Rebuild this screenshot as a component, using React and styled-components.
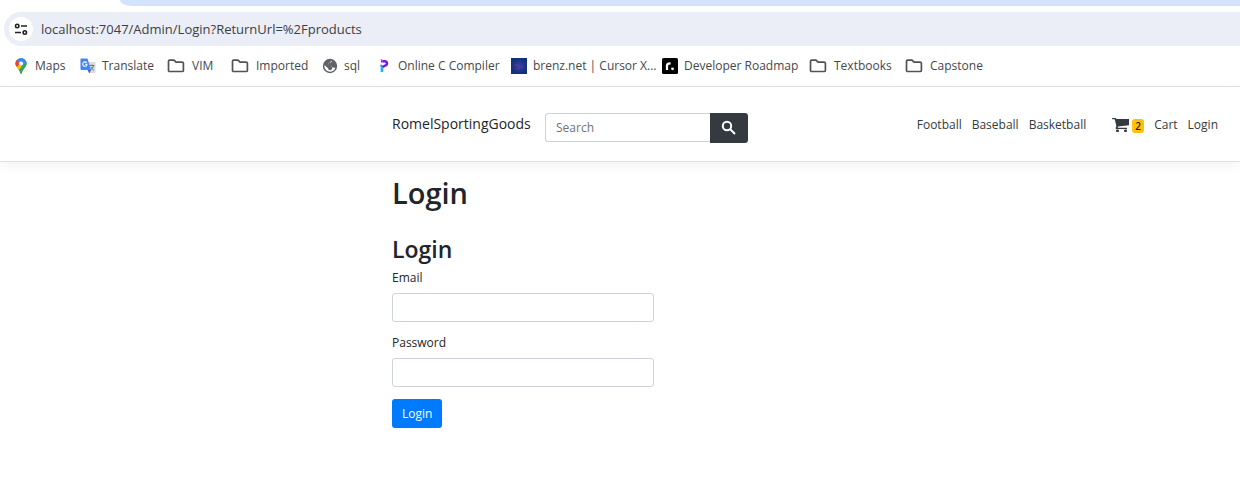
import React from "react";
import styled, { createGlobalStyle } from "styled-components";

const GlobalStyle = createGlobalStyle`
  *, *::before, *::after { box-sizing: border-box; }
  body {
    margin: 0;
    background: #fff;
    color: #212529;
    font-family: "Open Sans", "Noto Sans", sans-serif;
    font-size: 12px;
    line-height: 18px;
    overflow-x: hidden;
  }
  button, input { font: inherit; }
`;

const gutter = "clamp(16px, 32vw, 392px)";

const TabStrip = styled.div`
  height: 6px;
  margin-left: 120px;
  border-bottom-left-radius: 12px 6px;
  background: #d3e3fd;
`;

const AddressBar = styled.div`
  display: flex;
  align-items: center;
  gap: 8px;
  height: 34px;
  margin: 6px 0 0 4px;
  padding-left: 5px;
  border-radius: 17px 0 0 17px;
  background: #ebeef7;
`;

const SiteInfo = styled.button`
  display: grid;
  place-items: center;
  flex: none;
  width: 24px;
  height: 24px;
  padding: 0;
  border: 0;
  border-radius: 50%;
  background: #fff;
`;

const UrlInput = styled.input`
  flex: 1;
  min-width: 0;
  height: 24px;
  padding: 0;
  border: 0;
  outline: 0;
  background: transparent;
  color: #3c4043;
  font-size: 13px;
`;

const Bookmarks = styled.nav`
  display: flex;
  align-items: center;
  gap: 16px;
  height: 41px;
  padding-left: 13px;
  border-bottom: 1px solid #dfe1e5;
  overflow: hidden;
`;

const Bookmark = styled.a`
  display: flex;
  align-items: center;
  gap: 6px;
  flex: none;
  color: #45484b;
  text-decoration: none;
  white-space: nowrap;
`;

const BookmarkLabel = styled.span`
  width: ${(p) => p.$width}px;
`;

const Header = styled.header`
  display: flex;
  align-items: center;
  height: 75px;
  padding: 0 16px 0 ${gutter};
  border-bottom: 1px solid #dee2e6;
  box-shadow: 0 4px 12px rgba(0, 0, 0, 0.05);
`;

const Brand = styled.a`
  flex: none;
  width: 153px;
  color: #212529;
  font-size: 14px;
  text-decoration: none;
`;

const SearchForm = styled.form`
  display: flex;
  align-items: flex-start;
  padding-top: 8px;
`;

const TextField = styled.input`
  width: 100%;
  height: 29px;
  padding: 4px 10px;
  border: 1px solid #ced4da;
  border-radius: 3px;
  background: #fff;
  color: #495057;
  &::placeholder { color: #6c757d; opacity: 1; }
`;

const SearchField = styled(TextField)`
  width: 165px;
  border-right: 0;
  border-radius: 3px 0 0 3px;
`;

const SearchButton = styled.button`
  display: grid;
  place-items: center;
  width: 38px;
  height: 30px;
  padding: 0;
  border: 0;
  border-radius: 0 3px 3px 0;
  background: #343a40;
  color: #fff;
`;

const Menu = styled.nav`
  display: flex;
  align-items: center;
  gap: 10px;
  margin-left: auto;
  padding: 2px 6px 0 0;
`;

const MenuLink = styled.a`
  color: #343a40;
  text-decoration: none;
  white-space: nowrap;
`;

const CartSummary = styled.a`
  display: flex;
  align-items: center;
  gap: 3px;
  margin-left: 16px;
  color: #343a40;
  text-decoration: none;
`;

const Badge = styled.span`
  width: 12px;
  height: 14px;
  margin-top: 2px;
  border-radius: 3px;
  background: #ffc107;
  color: #212529;
  font-size: 10px;
  font-weight: 600;
  line-height: 14px;
  text-align: center;
`;

const Main = styled.main`
  padding: 13px 16px 24px ${gutter};
`;

const Title = styled.h1`
  margin: 0;
  font-size: 29px;
  font-weight: 600;
  line-height: 36px;
`;

const Subtitle = styled.h2`
  margin: 24px 0 6px;
  font-size: 23px;
  font-weight: 600;
  line-height: 28px;
`;

const LoginForm = styled.form`
  display: flex;
  flex-direction: column;
  align-items: flex-start;
  gap: 12px;
  max-width: 262px;
`;

const Field = styled.div`
  width: 100%;
`;

const FieldLabel = styled.label`
  display: block;
  margin-bottom: 6px;
`;

const SubmitButton = styled.button`
  height: 29px;
  padding: 1px 10px 0;
  border: 0;
  border-radius: 3px;
  background: #007bff;
  color: #fff;
`;

const TuneIcon = () => (
  <svg width="14" height="14" viewBox="0 0 14 14" fill="none" stroke="#202124" strokeWidth="1.6">
    <circle cx="3.2" cy="4" r="1.7" />
    <path d="M7 4h6M1 10.5h6" />
    <circle cx="10.8" cy="10.5" r="1.7" />
  </svg>
);

const MapsIcon = () => (
  <svg width="16" height="16" viewBox="0 0 16 16">
    <clipPath id="pin">
      <path d="M8 0a5.6 5.6 0 0 0-5.6 5.6c0 3.8 4.1 5.3 4.7 9.4.2 1.3 1.6 1.3 1.8 0 .6-4.1 4.7-5.6 4.7-9.4A5.6 5.6 0 0 0 8 0z" />
    </clipPath>
    <g clipPath="url(#pin)">
      <path fill="#34a853" d="M0 0h16v16H0z" />
      <path fill="#fbbc04" d="M0 11.5 8 3l3 4-7.2 7z" />
      <path fill="#4285f4" d="M6 6 12 1l4 2-7 6z" />
      <path fill="#34a853" d="m6 12 8-9 2 3-7 10z" />
      <path fill="#ea4335" d="M1 1.5h3.2l3.6 3L4.4 8.5 1 7z" />
      <path fill="#4285f4" d="m4 2 4-2h6L8 7z" />
    </g>
    <circle cx="8" cy="5.6" r="2.1" fill="#fff" />
  </svg>
);

const TranslateIcon = () => (
  <svg width="16" height="16" viewBox="0 0 16 16" fill="none">
    <path fill="#dadce0" d="M6 4h8.5c.6 0 1 .4 1 1v9c0 .6-.4 1-1 1H9z" />
    <path stroke="#667785" d="M9.500 7.5h5M12 6.5v1M13.5 7.7c-.4 1.900-1.700 3.6-3.500 4.7M11 9c.8 1.5 1.700 2.7 3 3.5" />
    <path fill="#4285f4" d="M1.5.5h6L11 12H1.5c-.6 0-1-.4-1-1V1.500c0-.6.4-1 1-1z" />
    <path fill="#3367d6" d="m7.500 12 2 3.500L11 12z" />
    <path stroke="#fff" strokeWidth="1.100" d="M6.700 4.800a2.200 2.200 0 1 0 .4 1.500H5.200" />
  </svg>
);

const FolderIcon = () => (
  <svg width="20" height="16" viewBox="0 0 20 16" fill="none" stroke="#505356" strokeWidth="1.700" strokeLinejoin="round">
    <path d="M2.500 3.200c0-.7.400-1.100 1.100-1.100H8l2 2h6c.7 0 1.400.4 1.400 1.100v7.200c0 .7-.7 1.100-1.400 1.100H3.600c-.7 0-1.100-.4-1.100-1.100z" />
  </svg>
);

const GlobeIcon = () => (
  <svg width="16" height="16" viewBox="0 0 16 16" fill="none">
    <circle cx="8" cy="8" r="7.200" fill="#5f6368" />
    <path fill="#fff" d="M9.800 2.500c.2 1.400-.6 2-1.700 2H7.200c0 1.200-.6 1.700-1.700 1.900v1.300h3.300c1 0 1.300.6 1.300 1.800h1.700c.8 0 1.200.3 1.500.8-1 2.200-3 3.400-5.300 3.400v-1.400c-1.200 0-1.700-.6-1.700-1.700L2.300 6.900 2.500 9.300c.7 2.500 2.900 4.400 5.500 4.400v-1.500c1.800 0 2-1 2-2.700 0-1.100-.6-1.800-1.700-1.800H5.500V6.400z" />
  </svg>
);

const CompilerIcon = () => (
  <svg width="16" height="16" viewBox="0 0 16 16" fill="none" strokeWidth="2.400">
    <path stroke="#6a18f5" d="M5 3.300h3.800c1.300 0 2.200.7 2.200 1.900S10 7.600 8.500 7.900L5.500 9.500" />
    <path stroke="#08b9ff" d="M4.500 7 6 8.500M5.900 9v5" />
    <path stroke="#f42df0" strokeWidth="1.600" d="m5 1.500 2 2" />
  </svg>
);

const BrenzIcon = () => (
  <svg width="16" height="16" viewBox="0 0 16 16">
    <radialGradient id="nebula">
      <stop offset="0" stopColor="#433da0" />
      <stop offset=".5" stopColor="#293491" />
      <stop offset="1" stopColor="#103277" />
    </radialGradient>
    <path fill="url(#nebula)" d="M0 0h16v16H0z" />
    <path stroke="#7a50b8" strokeOpacity=".3" d="M3 7h5M7 9h6M5 11h4" />
  </svg>
);

const RoadmapIcon = () => (
  <svg width="16" height="16" viewBox="0 0 16 16" fill="none">
    <rect width="16" height="16" rx="1.500" fill="#000" />
    <path stroke="#fff" strokeWidth="2.200" d="M5 12V7.500C5 6 6 5.300 8.600 5.300" />
    <circle cx="10.500" cy="10.800" r="1.400" fill="#fff" />
  </svg>
);

const SearchIcon = () => (
  <svg width="16" height="16" viewBox="0 0 16 16" fill="none" stroke="currentColor" strokeWidth="2">
    <circle cx="6" cy="6" r="4.200" />
    <path d="m9 9 5 5" />
  </svg>
);

const CartIcon = () => (
  <svg width="17" height="16" viewBox="0 0 17 16" fill="currentColor">
    <path d="M0 1h3.400c.4 0 .7.200.8.600L4.400 2H17v6.200L6.100 9.500l-.4 1.300H15V12H4.200c-.5 0-.8-.5-.6-.9l.8-2L2.700 2.300H.3z" />
    <rect x="4" y="12.500" width="3" height="2.500" rx="1" />
    <rect x="12" y="12.500" width="3" height="2.500" rx="1" />
  </svg>
);

const bookmarks = [
  { label: "Maps", width: 29, Icon: MapsIcon },
  { label: "Translate", width: 48, Icon: TranslateIcon },
  { label: "VIM", width: 22, Icon: FolderIcon },
  { label: "Imported", width: 50, Icon: FolderIcon },
  { label: "sql", width: 16, Icon: GlobeIcon },
  { label: "Online C Compiler", width: 97, Icon: CompilerIcon },
  { label: "brenz.net | Cursor X...", width: 113, Icon: BrenzIcon },
  { label: "Developer Roadmap", width: 108, Icon: RoadmapIcon },
  { label: "Textbooks", width: 54, Icon: FolderIcon },
  { label: "Capstone", width: 50, Icon: FolderIcon },
];

export default function App() {
  return (
    <>
      <GlobalStyle />
      <TabStrip />
      <AddressBar>
        <SiteInfo type="button" aria-label="View site information">
          <TuneIcon />
        </SiteInfo>
        <UrlInput aria-label="Address" defaultValue="localhost:7047/Admin/Login?ReturnUrl=%2Fproducts" />
      </AddressBar>
      <Bookmarks aria-label="Bookmarks">
        {bookmarks.map(({ label, width, Icon }) => (
          <Bookmark key={label} href="#">
            <Icon />
            <BookmarkLabel $width={width}>{label}</BookmarkLabel>
          </Bookmark>
        ))}
      </Bookmarks>
      <Header>
        <Brand href="#">RomelSportingGoods</Brand>
        <SearchForm role="search">
          <SearchField type="text" placeholder="Search" aria-label="Search" />
          <SearchButton type="button" aria-label="Search products">
            <SearchIcon />
          </SearchButton>
        </SearchForm>
        <Menu aria-label="Main">
          <MenuLink href="#">Football</MenuLink>
          <MenuLink href="#">Baseball</MenuLink>
          <MenuLink href="#">Basketball</MenuLink>
          <CartSummary href="#" aria-label="Cart, 2 items">
            <CartIcon />
            <Badge>2</Badge>
          </CartSummary>
          <MenuLink href="#">Cart</MenuLink>
          <MenuLink href="#">Login</MenuLink>
        </Menu>
      </Header>
      <Main>
        <Title>Login</Title>
        <Subtitle>Login</Subtitle>
        <LoginForm>
          <Field>
            <FieldLabel htmlFor="email">Email</FieldLabel>
            <TextField id="email" type="email" />
          </Field>
          <Field>
            <FieldLabel htmlFor="password">Password</FieldLabel>
            <TextField id="password" type="password" />
          </Field>
          <SubmitButton type="button">Login</SubmitButton>
        </LoginForm>
      </Main>
    </>
  );
}
